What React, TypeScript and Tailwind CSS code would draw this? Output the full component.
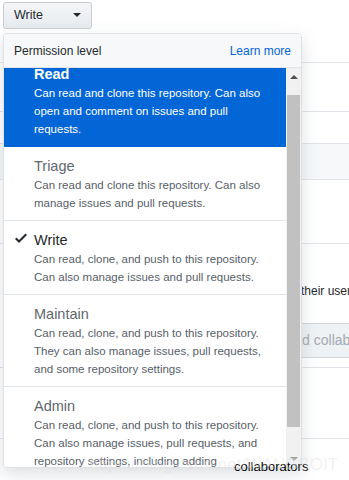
import React from 'react';

type Perm = {
   title: string;
   lines: string[];
   selected?: boolean;
   checked?: boolean;
   muted?: boolean;
};

const perms: Perm[] = [
   {
      title: 'Read',
      lines: [
         'Can read and clone this repository. Can also',
         'open and comment on issues and pull',
         'requests.',
      ],
      selected: true,
   },
   {
      title: 'Triage',
      lines: ['Can read and clone this repository. Can also', 'manage issues and pull requests.'],
      muted: true,
   },
   {
      title: 'Write',
      lines: ['Can read, clone, and push to this repository.', 'Can also manage issues and pull requests.'],
      checked: true,
   },
   {
      title: 'Maintain',
      lines: [
         'Can read, clone, and push to this repository.',
         'They can also manage issues, pull requests,',
         'and some repository settings.',
      ],
      muted: true,
   },
   {
      title: 'Admin',
      lines: [
         'Can read, clone, and push to this repository.',
         'Can also manage issues, pull requests, and',
         'repository settings, including adding',
      ],
      muted: true,
   },
];

const CheckIcon = () => (
   <svg width="12" height="16" viewBox="0 0 12 16" className="fill-[#24292e]">
      <path d="M12 5l-8 8-4-4 1.5-1.5L4 10l6.5-6.5L12 5z" />
   </svg>
);

const Caret = () => (
   <svg width="8" height="16" viewBox="0 0 8 16" className="fill-[#24292e]">
      <path d="M0 5l4 4 4-4z" />
   </svg>
);

function PermItem({ item }: { item: Perm }) {
   const titleColor = item.selected
      ? 'text-white font-bold'
      : item.muted
        ? 'text-[#5f676f]'
        : 'text-[#24292e]';
   return (
      <div
         className={`relative pl-[30px] pr-2 pt-[9px] pb-[8px] border-b ${
            item.selected ? 'bg-[#0366d6] border-[#0366d6]' : 'bg-white border-[#e1e4e8]'
         }`}
      >
         {item.checked && (
            <div className="absolute left-[11px] top-[9px]">
               <CheckIcon />
            </div>
         )}
         <div className={`text-[14.5px] leading-[20px] ${titleColor}`}>{item.title}</div>
         <div
            className={`text-[11.5px] leading-[18px] ${
               item.selected ? 'text-white' : 'text-[#586069]'
            }`}
         >
            {item.lines.map((l) => (
               <div key={l} className="whitespace-nowrap">
                  {l}
               </div>
            ))}
         </div>
      </div>
   );
}

function Scrollbar() {
   return (
      <div className="w-[15px] bg-[#f1f1f1] flex flex-col items-center">
         <div className="h-[17px] w-full flex items-center justify-center">
            <div className="w-0 h-0 border-l-[4px] border-r-[4px] border-b-[4px] border-l-transparent border-r-transparent border-b-[#505050]" />
         </div>
         <div className="mt-[10px] w-[13px] h-[332px] bg-[#c1c1c1]" />
         <div className="flex-1" />
         <div className="h-[17px] w-full flex items-center justify-center">
            <div className="w-0 h-0 border-l-[4px] border-r-[4px] border-t-[4px] border-l-transparent border-r-transparent border-t-[#a3a3a3]" />
         </div>
      </div>
   );
}

export default function App() {
   return (
      <div className="relative w-[349px] h-[480px] overflow-hidden bg-white font-['Liberation_Sans',Arial,sans-serif] text-[#24292e]">
         {/* page behind the menu */}
         <div className="h-[63px] border-b border-[#e1e4e8] pl-[3px] pt-[2px]">
            <button className="w-[89px] h-[27px] flex items-center justify-between pl-[10px] pr-[10px] rounded-[3px] border border-[#c8ccd0] bg-gradient-to-b from-[#f3f5f7] to-[#e8ebee] text-[12.5px]">
               <span>Write</span>
               <Caret />
            </button>
         </div>
         <div className="h-[49px] border-b border-[#e1e4e8]" />
         <div className="h-[31px]" />
         <div className="h-[37px] bg-[#f6f8fa] border-y border-[#e1e4e8]" />
         <div className="h-[64px] border-b border-[#e1e4e8]" />
         <div className="h-[79px] pt-[38px] pl-[301px] whitespace-nowrap text-[12px]">their username</div>
         <div className="h-[35px] pl-[270px]">
            <div className="w-[200px] h-full flex items-center pl-[14px] bg-[#eff2f4] border border-[#d1d5da] text-[14px] text-[#a3aab1] whitespace-nowrap">
               Add collaborator
            </div>
         </div>
         <div className="h-[10px] border-b border-[#e1e4e8]" />
         <div className="h-[71px] border-b border-[#e1e4e8]" />

         {/* permission dropdown */}
         <div className="absolute left-[3px] top-[33px] w-[299px] h-[435px] flex flex-col rounded-[4px] border border-[#dfe2e5] bg-white shadow-[0_6px_16px_rgba(140,149,159,0.3)] overflow-hidden">
            <div className="h-[34px] shrink-0 flex items-center justify-between px-[10px] bg-[#f6f8fa] border-b border-[#e1e4e8] text-[12px]">
               <span className="text-[#24292e]">Permission level</span>
               <span className="text-[#0366d6]">Learn more</span>
            </div>
            <div className="flex flex-1 min-h-0">
               <div className="flex-1 overflow-hidden">
                  <div className="-mt-[13px]">
                     {perms.map((p) => (
                        <PermItem key={p.title} item={p} />
                     ))}
                  </div>
               </div>
               <Scrollbar />
            </div>
         </div>

         {/* watermark artefacts */}
         <div className="absolute left-[234px] top-[459px] text-[13px] leading-[16px] text-black whitespace-nowrap">
            collaborators
         </div>
         <div className="absolute right-[11px] top-[455px] text-[17px] leading-[20px] text-[rgba(225,225,225,0.45)] whitespace-nowrap">
            https://blog.csdn.net/WANGBOIT
         </div>
      </div>
   );
}
